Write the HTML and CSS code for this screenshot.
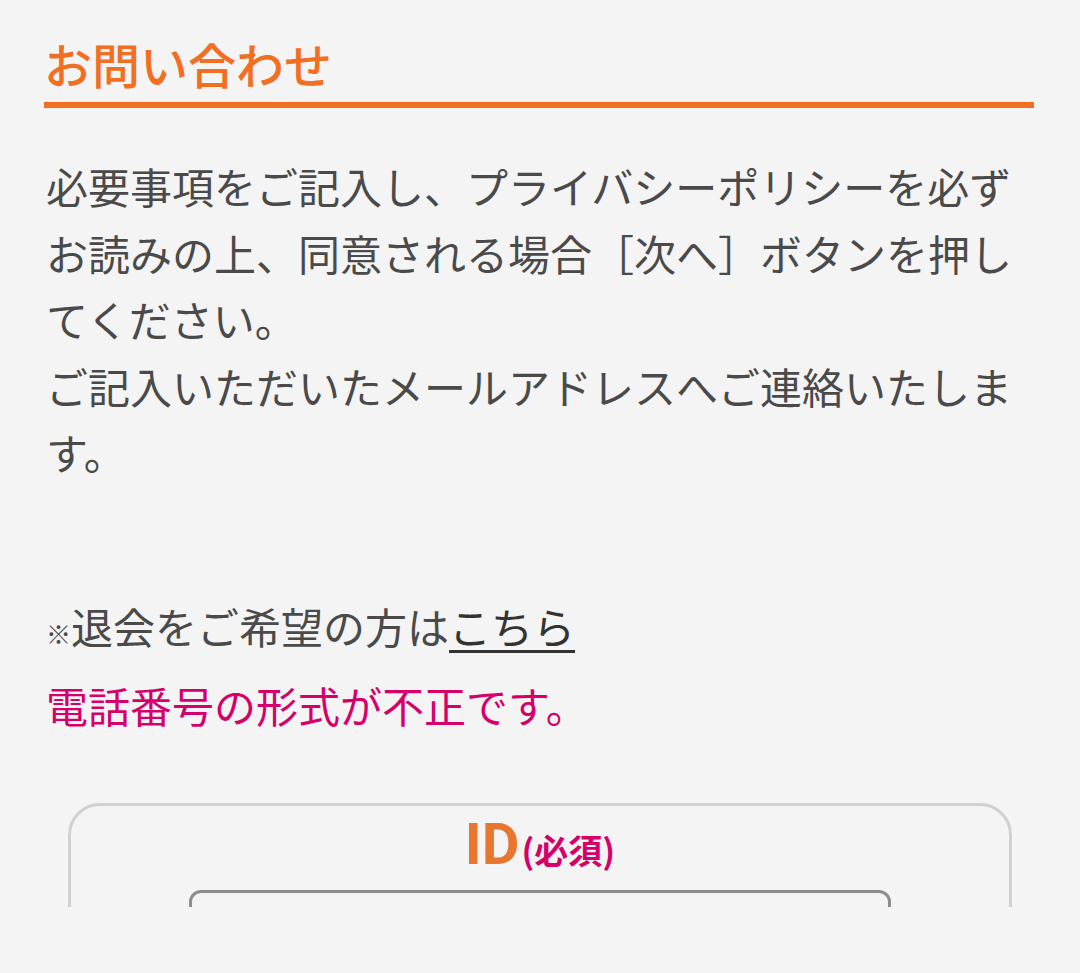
FILE: index.html
```html
<!DOCTYPE html>
<html lang="ja">
<head>
<meta charset="utf-8">
<title>お問い合わせ</title>
<link rel="stylesheet" href="styles.css">
</head>
<body>
<div class="page">
  <h1 class="title">お問い合わせ</h1>
  <p class="lead">必要事項をご記入し、プライバシーポリシーを必ずお読みの上、同意される場合［次へ］ボタンを押してください。<br>ご記入いただいたメールアドレスへご連絡いたします。</p>
  <p class="note"><span class="kome">※</span>退会をご希望の方は<a href="#" class="link">こちら</a></p>
  <p class="error">電話番号の形式が不正です。</p>
  <div class="card">
    <div class="label"><span class="label-main">ID</span><span class="label-req">(必須)</span></div>
    <div class="input"></div>
  </div>
</div>
</body>
</html>
```

FILE: styles.css
```css
html, body {
  margin: 0;
  padding: 0;
  background: #f4f4f4;
}
body {
  font-family: "Noto Sans CJK JP", "Noto Sans", sans-serif;
  color: #4a4a4a;
}
.page {
  height: 907px;
  overflow: hidden;
  padding: 34px 46px 0 44px;
  box-sizing: border-box;
}
.title {
  margin: 0;
  font-size: 48px;
  line-height: 58px;
  font-weight: 500;
  color: #f26e22;
  padding: 0 0 10px 0;
  border-bottom: 6px solid #f26e22;
}
.lead {
  margin: 45px 0 0 2px;
  font-size: 42px;
  line-height: 66.5px;
}
.note {
  margin: 107px 0 0 2px;
  font-size: 42px;
  line-height: 66px;
}
.kome {
  font-size: 25px;
  font-weight: 700;
}
.link {
  color: #333;
  text-decoration: underline;
  text-underline-offset: 6px;
  text-decoration-thickness: 3px;
}
.error {
  margin: 6px 0 0 2px;
  font-size: 42px;
  line-height: 66px;
  color: #d6006b;
}
.card {
  margin: 65px 22px 0 24px;
  border: 3px solid #d0d0d0;
  border-radius: 32px;
  padding: 4px 0 0;
  height: 300px;
  display: flex;
  flex-direction: column;
  align-items: center;
}
.label {
  display: flex;
  align-items: baseline;
  gap: 2px;
}
.label-main {
  font-family: Roboto, "Liberation Sans", sans-serif;
  font-weight: 700;
  font-size: 58px;
  line-height: 68px;
  color: #e8762f;
}
.label-req {
  font-weight: 700;
  font-size: 34px;
  color: #d6006b;
}
.input {
  margin-top: 12px;
  width: 702px;
  height: 60px;
  border: 3px solid #8d8d8d;
  border-radius: 12px;
  box-sizing: border-box;
}
```
